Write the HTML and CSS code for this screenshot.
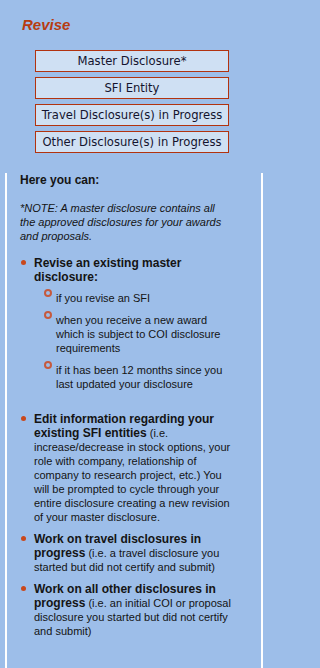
FILE: index.html
```html
<!DOCTYPE html>
<html>
<head>
<meta charset="utf-8">
<link rel="stylesheet" href="styles.css">
</head>
<body>
<div class="page">
  <h1 class="title">Revise</h1>
  <div class="menu">
    <a class="btn">Master Disclosure*</a>
    <a class="btn">SFI Entity</a>
    <a class="btn">Travel Disclosure(s) in Progress</a>
    <a class="btn">Other Disclosure(s) in Progress</a>
  </div>
  <div class="panel">
    <p class="lead">Here you can:</p>
    <p class="note">*NOTE: A master disclosure contains all the approved disclosures for your awards and proposals.</p>
    <ul class="list">
      <li class="item">
        <b>Revise an existing master disclosure:</b>
        <ul class="sub">
          <li class="sub-item">if you revise an SFI</li>
          <li class="sub-item">when you receive a new award which is subject to COI disclosure requirements</li>
          <li class="sub-item sub-last">if it has been 12 months since you last updated your disclosure</li>
        </ul>
      </li>
      <li class="item"><b>Edit information regarding your existing SFI entities</b> (i.e. increase/decrease in stock options, your role with company, relationship of company to research project, etc.) You will be prompted to cycle through your entire disclosure creating a new revision of your master disclosure.</li>
      <li class="item"><b>Work on travel disclosures in progress</b> (i.e. a travel disclosure you started but did not certify and submit)</li>
      <li class="item"><b>Work on all other disclosures in progress</b> (i.e. an initial COI or proposal disclosure you started but did not certify and submit)</li>
    </ul>
  </div>
</div>
</body>
</html>
```

FILE: styles.css
```css
html, body {
  margin: 0;
  padding: 0;
  background: #9dbee9;
  height: 100%;
}
body {
  width: 268px;
  overflow: hidden;
}
.page {
  display: flex;
  flex-direction: column;
  width: 268px;
  min-height: 100%;
  font-family: "Liberation Sans", Arial, sans-serif;
  color: #141414;
}
.title {
  margin: 0;
  padding: 16px 0 0 22px;
  height: 18px;
  font-size: 15px;
  line-height: 18px;
  font-weight: bold;
  font-style: italic;
  color: #b73c10;
}
.menu {
  display: flex;
  flex-direction: column;
  gap: 5px;
  margin: 16px 0 0 35px;
  width: 194px;
}
.btn {
  display: block;
  height: 20px;
  line-height: 20px;
  border: 1px solid #b2330f;
  background: #cfe0f3;
  text-align: center;
  font-family: "DejaVu Sans", Verdana, sans-serif;
  font-size: 11.6px;
  color: #14142e;
  white-space: nowrap;
}
.panel {
  flex: 1;
  margin: 20px 5px 0 5px;
  border-left: 2px solid #ffffff;
  border-right: 2px solid #ffffff;
  padding: 0 29px 20px 13px;
}
.lead {
  margin: 0;
  font-size: 12px;
  line-height: 14px;
  font-weight: bold;
}
.note {
  margin: 14px 0 0 0;
  font-size: 11px;
  line-height: 14px;
  font-style: italic;
}
.list {
  list-style: none;
  margin: 13px 0 0 0;
  padding: 0 0 0 14px;
  font-size: 11px;
  line-height: 14px;
}
.item {
  position: relative;
  margin-bottom: 8px;
}
.item::before {
  content: "";
  position: absolute;
  left: -13px;
  top: 4px;
  width: 5px;
  height: 5px;
  border-radius: 50%;
  background: #c9481c;
}
.item b {
  font-size: 12px;
}
.sub {
  list-style: none;
  margin: 7px 0 21px 0;
  padding: 0 0 0 22px;
}
.sub-item {
  position: relative;
  margin-bottom: 8px;
}
.sub-item.sub-last {
  margin-bottom: 0;
}
.sub-item::before {
  content: "";
  position: absolute;
  left: -12px;
  top: -2px;
  width: 4px;
  height: 4px;
  border-radius: 50%;
  border: 2px solid #c55a3e;
}
```
